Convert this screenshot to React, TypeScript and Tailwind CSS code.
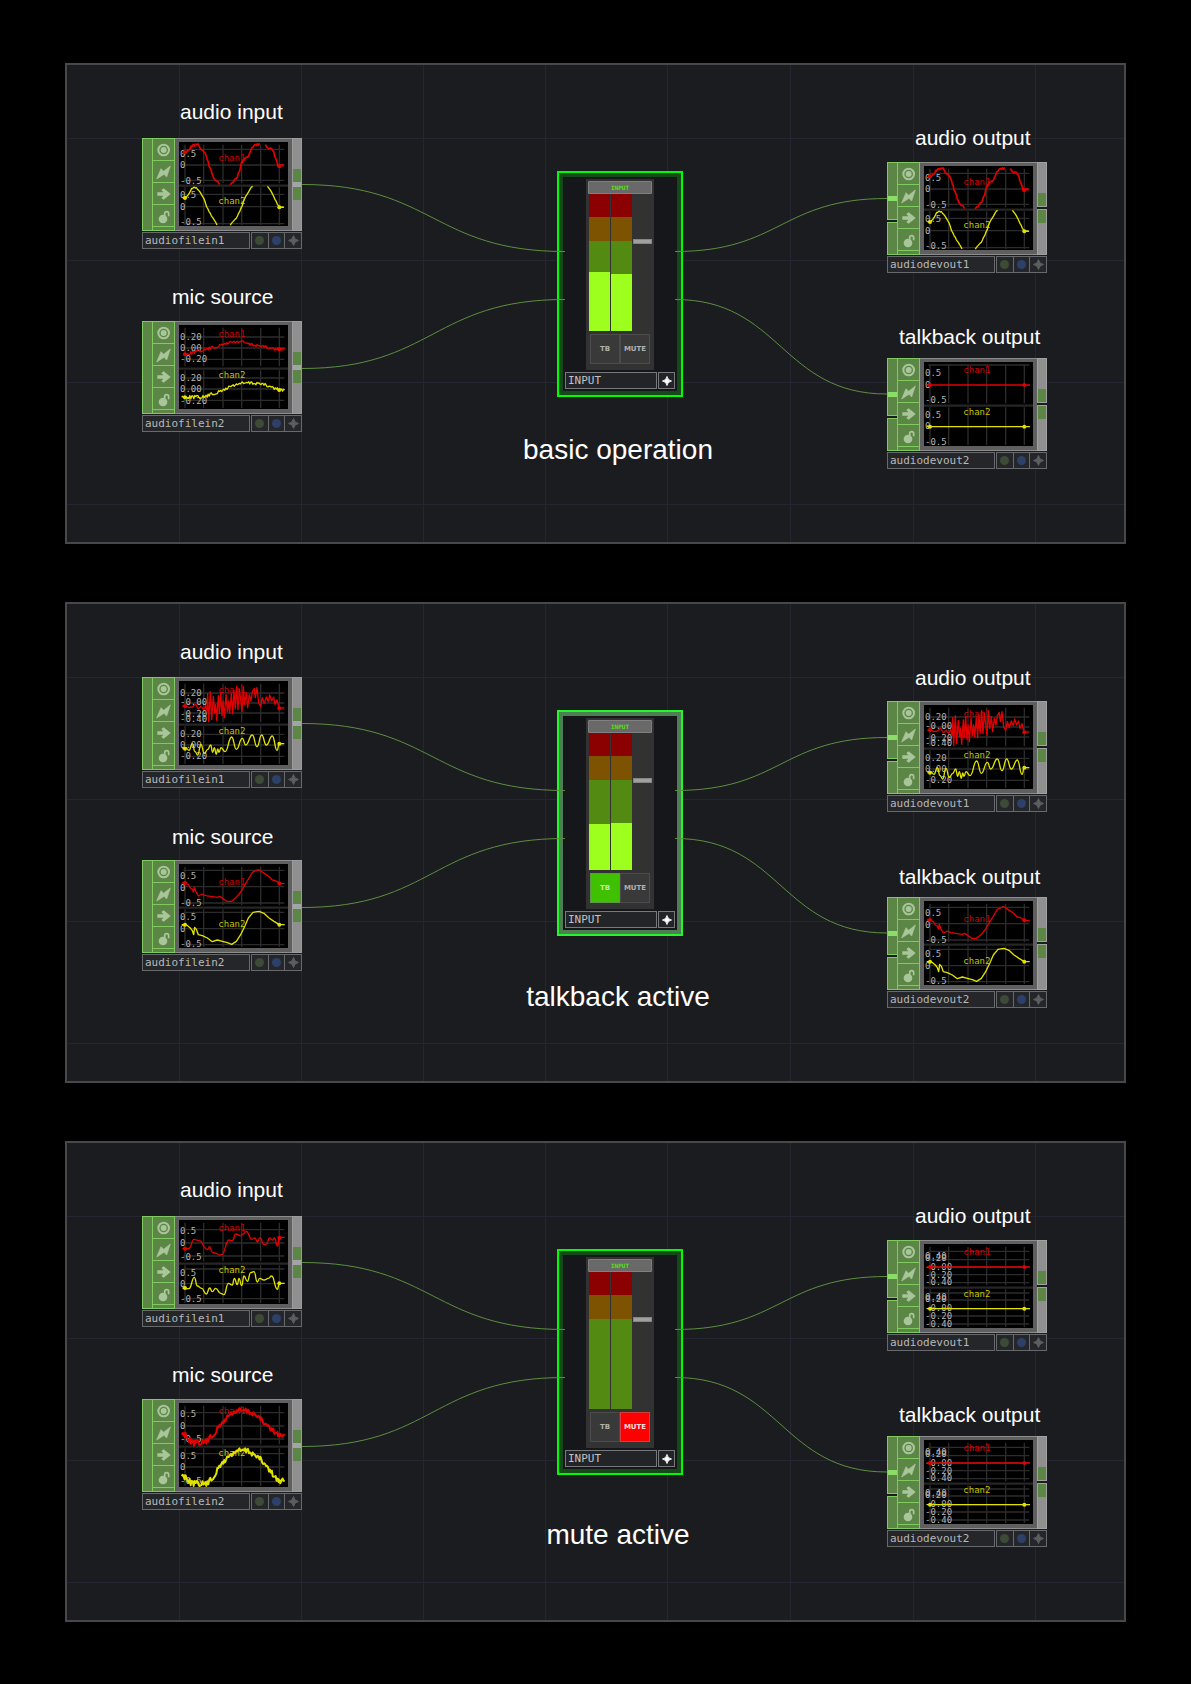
import React from "react";

type Pt = [number, number];
type Trace = { runs: Pt[][]; dots: Pt[]; noise?: number; width?: number; smooth?: boolean };
type Plot = {
  labels: [string, number][];
  grid: number[];
  nameY: [number, number];
  red: Trace;
  yellow: Trace;
};

const XS = [18, 74, 132, 188, 245, 301];

function roughen(run: Pt[], amp: number): Pt[] {
  const out: Pt[] = [];
  let seed = 7;
  for (let i = 0; i < run.length - 1; i++) {
    const [x0, y0] = run[i];
    const [x1, y1] = run[i + 1];
    const n = Math.max(1, Math.round((x1 - x0) / 3));
    for (let k = 0; k < n; k++) {
      seed = (seed * 1103515245 + 12345) % 2147483648;
      const r = seed / 2147483648 - 0.5;
      out.push([x0 + ((x1 - x0) * k) / n, y0 + ((y1 - y0) * k) / n + r * amp]);
    }
  }
  out.push(run[run.length - 1]);
  return out;
}

function toPath(run: Pt[], smooth?: boolean): string {
  return run
    .map(([x, y], i) => {
      if (i === 0) return `M${x} ${y}`;
      if (!smooth) return `L${x} ${y}`;
      const [px, py] = run[i - 1];
      const mid = (px + x) / 2;
      return `C${mid} ${py} ${mid} ${y} ${x} ${y}`;
    })
    .join("");
}

const halves = ([a, b, c]: number[], [d, e, f]: number[]): [string, number][] => [
  ["0.5", a], ["0", b], ["-0.5", c], ["0.5", d], ["0", e], ["-0.5", f],
];

const sine: Plot = {
  labels: halves([44, 78, 126], [168, 205, 250]),
  grid: [22, 69, 115, 157, 194, 245],
  nameY: [57, 185],
  red: {
    noise: 6,
    width: 5,
    runs: [
      [[11, 31], [18, 31], [30, 22], [38, 12], [46, 9], [58, 9], [64, 17], [78, 33], [85, 52], [90, 70], [97, 90], [105, 108], [113, 117], [122, 128]],
      [[154, 128], [165, 115], [175, 103], [182, 85], [188, 62], [196, 52], [205, 46], [215, 25], [225, 10], [232, 8], [243, 8]],
      [[258, 8], [265, 17], [278, 18], [284, 30], [290, 50], [297, 70], [301, 72], [315, 70]],
    ],
    dots: [[18, 31], [301, 73]],
  },
  yellow: {
    noise: 2,
    runs: [
      [[11, 168], [18, 168], [28, 158], [38, 140], [46, 136], [52, 138], [65, 153], [75, 170], [82, 192], [90, 208], [100, 226], [110, 240], [114, 249]],
      [[154, 249], [162, 238], [172, 228], [182, 208], [190, 190], [196, 172], [205, 155], [215, 138], [221, 133]],
      [[265, 133], [275, 145], [285, 165], [295, 186], [301, 196], [315, 196]],
    ],
    dots: [[18, 168], [301, 196]],
  },
};

const hum: Plot = {
  labels: [["0.20", 44], ["0.00", 78], ["-0.20", 112], ["0.20", 168], ["0.00", 202], ["-0.20", 236]],
  grid: [36, 69, 103, 159, 192, 226],
  nameY: [35, 160],
  red: {
    noise: 9,
    runs: [[[13, 88], [18, 88], [50, 80], [75, 75], [100, 68], [125, 62], [150, 52], [175, 50], [190, 50], [210, 58], [240, 62], [265, 68], [290, 73], [301, 73], [317, 71]]],
    dots: [[18, 88], [301, 73]],
  },
  yellow: {
    noise: 10,
    runs: [[[8, 216], [75, 216], [100, 207], [125, 200], [150, 186], [175, 177], [200, 174], [240, 175], [270, 184], [301, 195], [317, 195]]],
    dots: [[18, 217], [301, 195]],
  },
};

const music: Plot = {
  labels: [["0.20", 44], ["-0.00", 73], ["-0.20", 107], ["-0.40", 123], ["0.20", 168], ["0.00", 200], ["-0.20", 234]],
  grid: [36, 66, 96, 160, 192, 226],
  nameY: [35, 158],
  red: {
    runs: [[[10, 76], [18, 74], [30, 80], [40, 78], [50, 70], [58, 84], [66, 76], [74, 86], [80, 74], [84, 90], [86, 38], [89, 122], [94, 32], [98, 116], [103, 46], [107, 96], [110, 70], [113, 118], [118, 44], [121, 98], [125, 34], [129, 104], [132, 60], [136, 110], [141, 40], [145, 92], [149, 60], [152, 96], [157, 38], [161, 98], [165, 30], [169, 84], [173, 16], [177, 86], [181, 24], [185, 56], [189, 92], [193, 20], [197, 70], [202, 35], [206, 80], [211, 40], [216, 60], [220, 32], [226, 22], [229, 50], [234, 20], [239, 66], [245, 76], [250, 50], [256, 68], [262, 48], [268, 62], [272, 42], [278, 60], [284, 48], [288, 70], [294, 56], [300, 80], [316, 81]]],
    dots: [[18, 75], [301, 82]],
  },
  yellow: {
    smooth: true,
    runs: [[[10, 203], [20, 200], [30, 208], [40, 188], [48, 212], [56, 222], [66, 190], [76, 218], [86, 205], [95, 192], [101, 214], [106, 200], [112, 220], [116, 204], [120, 214], [126, 200], [138, 212], [158, 168], [172, 205], [190, 172], [200, 192], [220, 162], [234, 197], [248, 162], [262, 192], [280, 165], [294, 208], [301, 188], [316, 188]]],
    dots: [[18, 203], [301, 188]],
  },
};

const voice: Plot = {
  labels: halves([44, 80, 125], [168, 204, 249]),
  grid: [19, 68, 117, 145, 194, 242],
  nameY: [64, 190],
  red: {
    runs: [[[8, 57], [18, 57], [28, 62], [34, 72], [40, 75], [43, 84], [46, 70], [50, 82], [58, 96], [70, 90], [80, 95], [100, 98], [115, 100], [122, 97], [132, 104], [143, 112], [158, 112], [172, 100], [185, 84], [198, 62], [210, 42], [220, 25], [232, 19], [240, 17], [248, 23], [265, 34], [280, 48], [290, 50], [301, 58], [317, 59]]],
    dots: [[18, 57], [301, 58]],
  },
  yellow: {
    runs: [[[8, 182], [22, 182], [34, 192], [40, 200], [44, 212], [47, 190], [52, 196], [58, 212], [70, 215], [85, 222], [100, 233], [115, 228], [130, 232], [145, 236], [158, 241], [172, 232], [185, 212], [198, 185], [208, 162], [222, 145], [240, 142], [255, 148], [270, 162], [285, 172], [301, 182], [317, 182]]],
    dots: [[18, 182], [301, 182]],
  },
};

const jagged: Plot = {
  labels: halves([43, 77, 119], [167, 201, 247]),
  grid: [29, 69, 108, 147, 191, 236],
  nameY: [34, 158],
  red: {
    smooth: true,
    runs: [[[10, 86], [18, 86], [30, 85], [45, 58], [60, 62], [85, 88], [92, 80], [100, 97], [112, 100], [120, 105], [128, 104], [150, 60], [160, 62], [170, 42], [185, 47], [192, 42], [202, 34], [218, 58], [228, 54], [235, 66], [243, 53], [255, 74], [262, 72], [272, 54], [280, 60], [286, 54], [296, 78], [301, 52], [317, 52]]],
    dots: [[18, 86], [301, 53]],
  },
  yellow: {
    smooth: true,
    runs: [[[10, 204], [20, 206], [30, 206], [46, 172], [55, 198], [68, 205], [82, 222], [92, 204], [100, 215], [110, 205], [125, 220], [135, 224], [148, 190], [160, 195], [166, 175], [175, 194], [180, 175], [188, 197], [195, 168], [205, 184], [215, 158], [225, 155], [235, 186], [242, 175], [255, 180], [268, 175], [278, 168], [295, 208], [301, 190], [317, 190]]],
    dots: [[18, 204], [301, 190]],
  },
};

const noisy: Plot = {
  labels: halves([43, 77, 118], [168, 202, 244]),
  grid: [29, 69, 108, 152, 192, 236],
  nameY: [34, 159],
  red: {
    noise: 17,
    width: 6,
    runs: [[[8, 93], [20, 95], [30, 110], [45, 120], [65, 120], [85, 114], [100, 98], [115, 80], [130, 60], [145, 42], [160, 30], [180, 22], [200, 24], [220, 30], [235, 40], [250, 55], [265, 68], [280, 82], [301, 97], [317, 97]]],
    dots: [[18, 93], [301, 97]],
  },
  yellow: {
    noise: 17,
    width: 6,
    runs: [[[8, 218], [20, 222], [35, 238], [50, 242], [85, 242], [100, 226], [115, 203], [130, 180], [150, 160], [170, 145], [190, 142], [210, 145], [230, 158], [250, 175], [270, 200], [290, 225], [301, 236], [317, 234]]],
    dots: [[18, 220], [301, 235]],
  },
};

const flatTraces = {
  red: { runs: [[[8, 69], [318, 69]]], dots: [[18, 69], [301, 69]] } as Trace,
  yellow: { runs: [[[8, 194], [318, 194]]], dots: [[18, 194], [301, 194]] } as Trace,
};

const silent: Plot = {
  labels: halves([43, 77, 124], [167, 201, 248]),
  grid: [9],
  nameY: [34, 159],
  ...flatTraces,
};

const muted: Plot = {
  labels: [["0.40", 44], ["0.20", 51], ["-0.00", 77], ["-0.20", 101], ["-0.40", 124], ["0.40", 168], ["0.20", 175], ["-0.00", 201], ["-0.20", 225], ["-0.40", 248]],
  grid: [22, 47, 69, 92, 116, 147, 168, 194, 216, 240],
  nameY: [34, 158],
  ...flatTraces,
};

function TraceLine({ trace, color }: { trace: Trace; color: string }) {
  return (
    <g stroke={color} fill="none" strokeWidth={trace.width ?? 4} strokeLinejoin="round">
      {trace.runs.map((run, i) => (
        <path key={i} d={toPath(trace.noise ? roughen(run, trace.noise) : run, trace.smooth)} />
      ))}
      {trace.dots.map(([x, y], i) => (
        <circle key={i} cx={x} cy={y} r={6} fill={color} stroke="none" />
      ))}
    </g>
  );
}

function Scope({ plot }: { plot: Plot }) {
  return (
    <svg viewBox="0 0 327 252" className="block h-[84px] w-[109px] bg-black" role="img" aria-label="waveform">
      <g stroke="#2c2c2c" strokeWidth={4}>
        {XS.map((x) => (
          <path key={x} d={`M${x} 8V124M${x} 136V249`} />
        ))}
        {plot.grid.map((y) => (
          <path key={y} d={`M13 ${y}H316`} />
        ))}
      </g>
      <path d="M0 131H327" stroke="#262626" strokeWidth={7} />
      <g className="font-['DejaVu_Sans_Mono',monospace]" fontSize={27}>
        <g fill="#b4b4b4">
          {plot.labels.map(([t, y], i) => (
            <text key={i} x={3} y={y}>{t}</text>
          ))}
        </g>
        <text x={118} y={plot.nameY[0]} fill="#cc0000">chan1</text>
        <text x={118} y={plot.nameY[1]} fill="#c4c400">chan2</text>
      </g>
      <TraceLine trace={plot.red} color="#e20000" />
      <TraceLine trace={plot.yellow} color="#e2e200" />
    </svg>
  );
}

const ICONS = [
  {
    name: "viewer",
    art: (
      <>
        <circle cx={32} cy={33} r={16} fill="none" stroke="#a9c69b" strokeWidth={6} />
        <circle cx={32} cy={33} r={9} fill="#a9c69b" />
      </>
    ),
  },
  { name: "bypass", art: <path d="M11 54L24 23L32 31L52 15L41 48L33 40Z" fill="#a9c69b" stroke="#a9c69b" strokeWidth={2} /> },
  { name: "export", art: <path d="M13 28H31L25 21L32 16L53 33L32 50L25 45L31 38H13Z" fill="#a9c69b" /> },
  {
    name: "lock",
    art: (
      <>
        <circle cx={30} cy={42} r={13} fill="#a9c69b" />
        <path d="M35 36V26a6 6 0 0 1 12 0v8" fill="none" stroke="#a9c69b" strokeWidth={5} />
      </>
    ),
  },
];

function Spark({ className }: { className: string }) {
  return (
    <svg viewBox="0 0 12 12" className={className} aria-hidden="true">
      <path d="M6 0.5Q6.8 5.2 11.5 6Q6.8 6.8 6 11.5Q5.2 6.8 0.5 6Q5.2 5.2 6 0.5Z" fill="currentColor" stroke="currentColor" strokeWidth={1} />
    </svg>
  );
}

function AudioNode({ name, plot, output, place }: { name: string; plot: Plot; output?: boolean; place: string }) {
  return (
    <article className={`absolute flex w-[160px] flex-col gap-px ${place}`}>
      <div className="flex h-[93px]">
        {output ? (
          <div className="flex w-[10px] flex-col gap-[2px]">
            <div className="h-[58px] border border-r-0 border-[#7fcb60] bg-[#5c8646] pt-[33px]">
              <div className="h-[5px] bg-[#8ade68]" />
            </div>
            <div className="flex-1 border border-r-0 border-[#7fcb60] bg-[#5c8646]" />
          </div>
        ) : (
          <div className="w-[10px] border border-r-0 border-[#7fcb60] bg-[#5c8646]" />
        )}
        <div className="flex w-[23px] flex-col border border-[#7fcb60] bg-[#5c8646]">
          {ICONS.map((icon) => (
            <button key={icon.name} type="button" aria-label={icon.name} className="h-[22px] border-b border-[#7fcb60]">
              <svg viewBox="0 0 63 63" className="block size-[21px]" aria-hidden="true">{icon.art}</svg>
            </button>
          ))}
        </div>
        <div className="flex-1 border-y border-[#8d8d8d] bg-[#5f5f5f] pt-[3px] pl-[4px]">
          <Scope plot={plot} />
        </div>
        {output ? (
          <div className="flex w-[10px] flex-col gap-[2px]">
            <div className="flex h-[45px] flex-col justify-end border border-[#a2a2a2] bg-[#8f8f8f]">
              <div className="h-[13px] bg-[#5c8646]" />
            </div>
            <div className="flex-1 border border-[#a2a2a2] bg-[#8f8f8f]">
              <div className="h-[13px] bg-[#5c8646]" />
            </div>
          </div>
        ) : (
          <div className="w-[10px] border border-[#9c9c9c] bg-[#8f8f8f] pt-[30px]">
            <div className="h-[13px] bg-[#5c8646]" />
            <div className="h-[5px] bg-[#a3a3a8]" />
            <div className="h-[13px] bg-[#5c8646]" />
          </div>
        )}
      </div>
      <div className="flex h-[17px] gap-px">
        <div className="w-[108px] border border-[#68696c] bg-[#252629] pl-[2px] font-['DejaVu_Sans_Mono',monospace] text-[11px] leading-[15px] text-[#b8b8b8]">
          {name}
        </div>
        <div className="flex flex-1 divide-x divide-[#68696c] border border-[#68696c] bg-[#252629]">
          <div className="flex flex-1 items-center justify-center">
            <span className="size-[9px] rounded-full bg-[#3d4b36]" />
          </div>
          <div className="flex flex-1 items-center justify-center">
            <span className="size-[9px] rounded-full bg-[#2c4069]" />
          </div>
          <div className="flex flex-1 items-center justify-center text-[#5d5e60]">
            <Spark className="size-[11px]" />
          </div>
        </div>
      </div>
    </article>
  );
}

function Meter({ level }: { level: number }) {
  return (
    <div className="flex h-[137px] w-[21px] flex-col bg-[#528a12]">
      <div className="h-[23px] bg-[#8b0000]" />
      <div className="h-[24px] bg-[#7d5200]" />
      <div className="flex-1" />
      <div className="bg-[#9dff1e]" style={{ height: level }} />
    </div>
  );
}

type Mode = "basic" | "talkback" | "mute";

function Strip({ mode, levels }: { mode: Mode; levels: [number, number] }) {
  const tb = mode === "talkback";
  const mute = mode === "mute";
  return (
    <article
      className={`absolute top-[106px] left-[490px] w-[126px] border-2 ${tb ? "border-[#27f52c]" : "border-[#00fa00]"}`}
    >
      <div className={`border-4 bg-[#16171b] p-[2px] ${tb ? "border-[#4c8052]" : "border-[#14491a]"}`}>
        <div className="mx-auto flex h-[191px] w-[68px] flex-col bg-[#323232] pt-[2px]">
          <div className="mx-[2px] h-[13px] rounded-[1px] border border-[#808080] bg-[#696969] text-center font-['DejaVu_Sans_Mono',monospace] text-[6px] leading-[11px] font-bold text-[#52e01c]">
            INPUT
          </div>
          <div className="flex gap-px pl-[3px]">
            <Meter level={levels[0]} />
            <Meter level={levels[1]} />
            <input
              type="range"
              aria-label="Input level"
              defaultValue={66}
              className="h-[137px] w-[19px] appearance-none bg-transparent [direction:rtl] [writing-mode:vertical-lr] [&::-webkit-slider-thumb]:h-[5px] [&::-webkit-slider-thumb]:w-[19px] [&::-webkit-slider-thumb]:appearance-none [&::-webkit-slider-thumb]:border [&::-webkit-slider-thumb]:border-[#858585] [&::-webkit-slider-thumb]:bg-[#a0a0a0]"
            />
          </div>
          <div className="mt-[3px] flex h-[30px] pl-[4px] font-['DejaVu_Sans',sans-serif] text-[7px] font-bold">
            <button
              type="button"
              aria-pressed={tb}
              className={`w-[30px] border ${tb ? "border-[#5c9a48] bg-[#3fc000] text-[#c4e6b4]" : "border-[#4c4c4c] bg-[#393939] text-[#b0b0b0]"}`}
            >
              TB
            </button>
            <button
              type="button"
              aria-pressed={mute}
              className={`w-[30px] border ${mute ? "border-[#d83c3c] bg-[#ff0000] text-[#ffdada]" : "border-[#4c4c4c] bg-[#393939] text-[#b0b0b0]"}`}
            >
              MUTE
            </button>
          </div>
        </div>
        <div className="mt-[2px] flex h-[17px] gap-px">
          <div className="flex-1 border border-[#77787b] bg-[#232427] pl-[2px] font-['DejaVu_Sans_Mono',monospace] text-[11px] leading-[15px] text-[#c2c2c2]">
            INPUT
          </div>
          <button
            type="button"
            aria-label="Activate viewer"
            className="flex w-[17px] items-center justify-center border border-[#77787b] bg-[#232427] text-white"
          >
            <Spark className="size-[10px]" />
          </button>
        </div>
      </div>
    </article>
  );
}

function Label({ children, place }: { children: string; place: string }) {
  return <h3 className={`absolute text-[21px] leading-6 whitespace-nowrap ${place}`}>{children}</h3>;
}

const V_LINES = [112, 234, 356, 478, 600, 723, 846, 968];
const H_LINES = [73, 195, 317, 439];

function Canvas({ mode, caption, captionPlace, levels, plots, shifted }: {
  mode: Mode;
  caption: string;
  captionPlace: string;
  levels: [number, number];
  plots: [Plot, Plot, Plot, Plot];
  shifted?: boolean;
}) {
  return (
    <section className="relative h-[481px] w-full overflow-hidden border-2 border-[#484848] bg-[#1b1c1f] text-white">
      <svg className="absolute inset-0 h-full w-full" aria-hidden="true">
        <g stroke="#252631" strokeWidth={1} shapeRendering="crispEdges">
          {V_LINES.map((x) => <line key={x} x1={x} x2={x} y1="0" y2="100%" />)}
          {H_LINES.map((y) => <line key={y} x1="0" x2="100%" y1={y} y2={y} />)}
        </g>
      </svg>

      <Label place={shifted ? "left-[113px] top-[36px]" : "left-[113px] top-[35px]"}>audio input</Label>
      <AudioNode name="audiofilein1" plot={plots[0]} place="left-[75px] top-[73px]" />
      <Label place={shifted ? "left-[105px] top-[221px]" : "left-[105px] top-[220px]"}>mic source</Label>
      <AudioNode name="audiofilein2" plot={plots[1]} place="left-[75px] top-[256px]" />

      <Strip mode={mode} levels={levels} />
      <h2 className={`absolute left-[551px] -translate-x-1/2 text-[28px] leading-8 whitespace-nowrap ${captionPlace}`}>
        {caption}
      </h2>

      <Label place={shifted ? "left-[848px] top-[62px]" : "left-[848px] top-[61px]"}>audio output</Label>
      <AudioNode output name="audiodevout1" plot={plots[2]} place="left-[820px] top-[97px]" />
      <Label place={shifted ? "left-[832px] top-[261px]" : "left-[832px] top-[260px]"}>talkback output</Label>
      <AudioNode output name="audiodevout2" plot={plots[3]} place="left-[820px] top-[293px]" />

      <svg className="pointer-events-none absolute inset-0 h-full w-full" aria-hidden="true">
        <g stroke="#5c8f40" strokeWidth={1} fill="none">
          <path d="M235 119.5C366 119.5 366 186.5 498 186.5" />
          <path d="M235 303.5C366 303.5 366 234.5 498 234.5" />
          <path d="M608 186.5C714 186.5 714 133.5 820 133.5" />
          <path d="M608 234.5C714 234.5 714 329 820 329" />
        </g>
      </svg>
    </section>
  );
}

export default function App() {
  return (
    <main className="flex min-h-screen flex-col gap-[58px] bg-black px-[65px] pt-[63px] pb-[62px] font-['Liberation_Sans',Arial,sans-serif]">
      <Canvas mode="basic" caption="basic operation" captionPlace="top-[369px]" levels={[59, 57]} plots={[sine, hum, sine, silent]} />
      <Canvas mode="talkback" caption="talkback active" captionPlace="top-[377px]" levels={[46, 47]} plots={[music, voice, music, voice]} shifted />
      <Canvas mode="mute" caption="mute active" captionPlace="top-[376px]" levels={[0, 0]} plots={[jagged, noisy, muted, muted]} />
    </main>
  );
}
